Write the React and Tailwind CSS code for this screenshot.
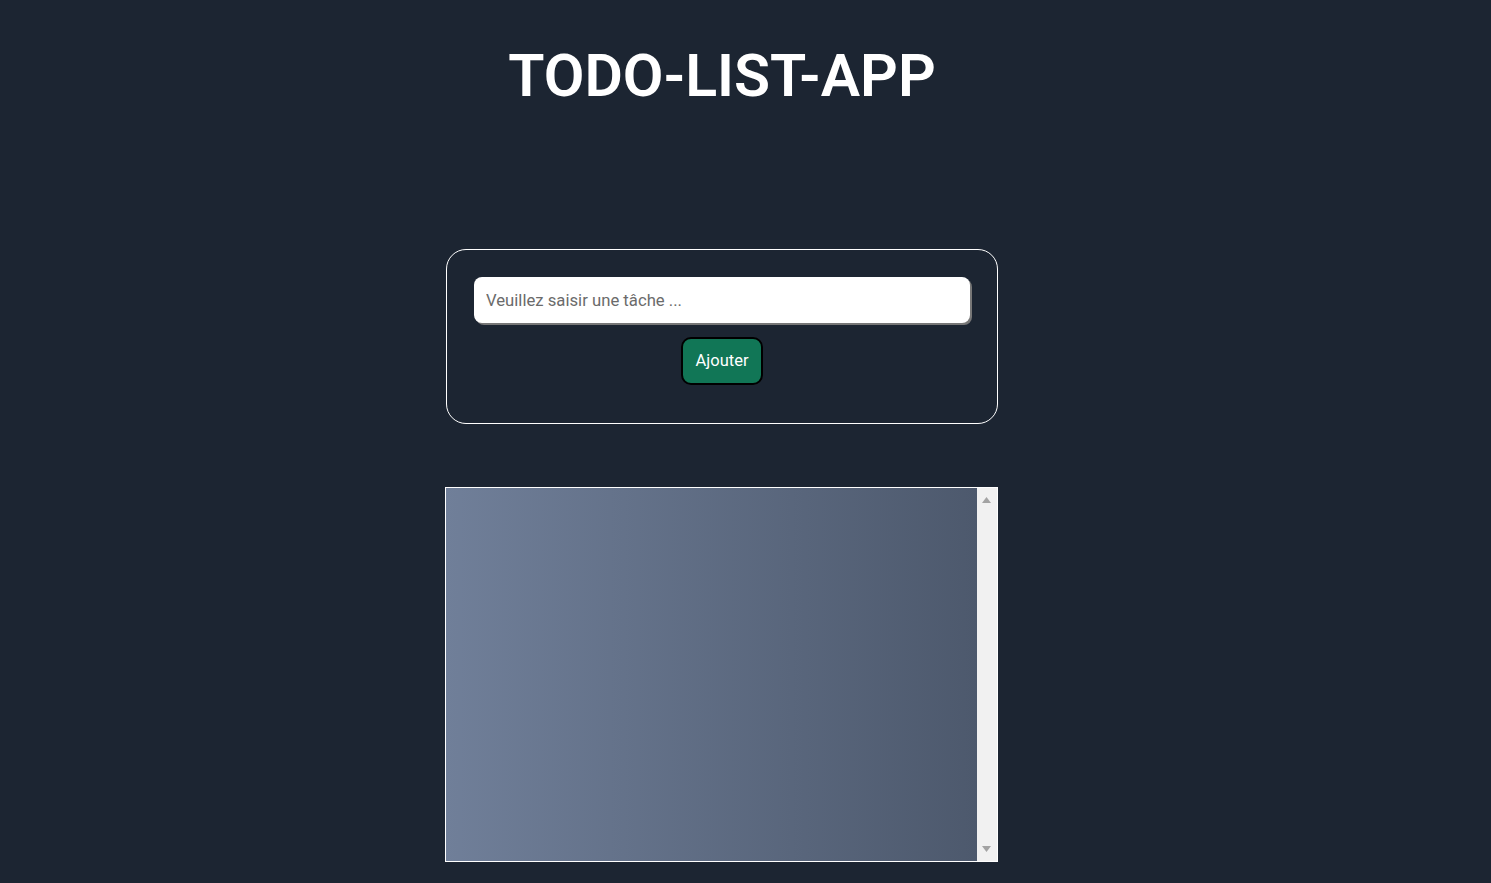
import React, { useState } from "react";

const App = () => {
    const [task, setTask] = useState("");
    const [tasks, setTasks] = useState([]);

    const addTask = () => {
        if (!task.trim()) return;
        setTasks([...tasks, task]);
        setTask("");
    };

    return (
        <div className="min-h-screen bg-[#1c2532] pr-[47px]" style={{ fontFamily: "Roboto, sans-serif" }}>
            <div className="flex flex-col items-center">
                {/* Title */}
                <h1 className="mt-[42px] text-[59px] leading-[68px] font-semibold text-white">TODO-LIST-APP</h1>

                {/* Form */}
                <div className="mt-[139px] w-[552px] h-[175px] border border-white rounded-[20px] px-[27px] pt-[27px] flex flex-col items-center">
                    <input
                        className="w-full h-[46px] bg-white rounded-[8px] px-3 text-[16.7px] text-gray-800 placeholder:text-[#6b6b6b] shadow-[2px_2px_0_0_#777] outline-none"
                        placeholder="Veuillez saisir une tâche ..."
                        value={task}
                        onChange={(e) => setTask(e.target.value)}
                        onKeyDown={(e) => { if (e.key === "Enter") addTask(); }}
                    />
                    <button
                        type="button"
                        onClick={addTask}
                        className="mt-[14px] w-[82px] h-[48px] bg-[#117656] border-2 border-black rounded-[10px] text-white text-[16.5px] font-normal pt-[1px]"
                    >
                        Ajouter
                    </button>
                </div>

                {/* Liste */}
                <div className="mt-[63px] mr-[2px] w-[553px] h-[375px] border border-white flex">
                    <div className="flex-1 overflow-hidden bg-gradient-to-r from-[#707f99] to-[#4d596d]">
                        {tasks.map((t, i) => (
                            <div key={i} className="px-4 py-2 text-white">{t}</div>
                        ))}
                    </div>
                    {/* barre de défilement */}
                    <div className="w-[20px] bg-[#f1f1f1] flex flex-col items-center justify-between py-[9px]">
                        <svg width="9" height="6" viewBox="0 0 9 6"><path d="M4.5 0 L9 6 L0 6 Z" fill="#a3a3a3" /></svg>
                        <svg width="9" height="6" viewBox="0 0 9 6"><path d="M0 0 L9 0 L4.5 6 Z" fill="#a3a3a3" /></svg>
                    </div>
                </div>
            </div>
        </div>
    );
};

export default App;
